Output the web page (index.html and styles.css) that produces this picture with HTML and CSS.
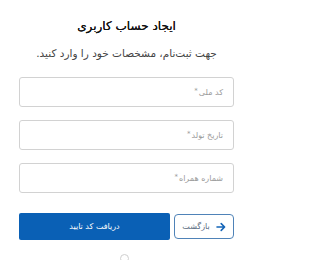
FILE: index.html
```html
<!DOCTYPE html>
<html lang="fa">
<head>
<meta charset="utf-8">
<link rel="stylesheet" href="styles.css">
</head>
<body>
<main class="page" dir="rtl">
  <h1 class="title">ایجاد حساب کاربری</h1>
  <p class="subtitle">جهت ثبت‌نام، مشخصات خود را وارد کنید.</p>
  <form class="form">
    <div class="field"><span class="ph">کد ملی<sup>*</sup></span></div>
    <div class="field"><span class="ph">تاریخ تولد<sup>*</sup></span></div>
    <div class="field"><span class="ph">شماره همراه<sup>*</sup></span></div>
    <div class="actions">
      <button type="button" class="btn-back">
        <svg class="arrow" width="10" height="10" viewBox="0 0 10 10"><path d="M1 5h7.5M5.2 1.6L8.6 5L5.2 8.4" fill="none" stroke="#1565b8" stroke-width="1.6" stroke-linecap="round" stroke-linejoin="round"/></svg>
        <span>بازگشت</span>
      </button>
      <button type="button" class="btn-primary">دریافت کد تایید</button>
    </div>
  </form>
  <div class="dot"></div>
</main>
</body>
</html>
```

FILE: styles.css
```css
html, body {
  margin: 0;
  padding: 0;
  background: #ffffff;
}
body {
  font-family: "DejaVu Sans", "Noto Sans", sans-serif;
  color: #222;
}
.page {
  width: 215px;
  margin: 0 0 0 19px;
  display: flex;
  flex-direction: column;
  align-items: stretch;
}
.title {
  margin: 18px 0 0;
  font-size: 12px;
  font-weight: normal;
  text-align: center;
  line-height: 16px;
  color: #111;
  text-shadow: 0 0 0.4px #111;
}
.subtitle {
  margin: 12px 0 0;
  font-size: 10.5px;
  text-align: center;
  line-height: 14px;
  color: #444;
}
.form {
  margin-top: 17px;
  display: flex;
  flex-direction: column;
  gap: 13px;
}
.field {
  height: 28px;
  border: 1px solid #d2d2d2;
  border-radius: 3px;
  display: flex;
  align-items: center;
  padding: 0 10px;
}
.ph {
  font-size: 8px;
  color: #9a9a9a;
}
.ph sup {
  font-size: 7px;
  vertical-align: 2px;
  margin-right: 1px;
}
.actions {
  margin-top: 8px;
  display: flex;
  gap: 4px;
}
.btn-back {
  width: 60px;
  height: 25px;
  box-sizing: border-box;
  border: 1px solid #4f83b8;
  border-radius: 4px;
  background: #fff;
  display: flex;
  align-items: center;
  justify-content: center;
  gap: 6px;
  padding: 0;
  font-family: inherit;
  font-size: 8px;
  color: #5a6b80;
}
.arrow {
  display: block;
}
.btn-primary {
  flex: 1;
  height: 27px;
  margin-top: -1px;
  border: none;
  border-radius: 2px;
  background: #0a60b5;
  color: #fff;
  font-family: inherit;
  font-size: 8px;
  font-weight: normal;
  padding: 0;
}
.dot {
  width: 7px;
  height: 7px;
  border: 1px solid #cfcfcf;
  border-radius: 50%;
  margin: 14px auto 0;
  transform: translateX(-2px);
}
```
